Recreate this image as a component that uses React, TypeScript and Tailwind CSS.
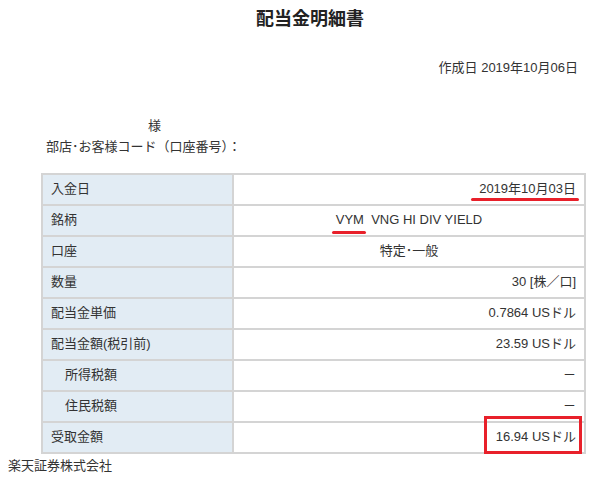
export default function App() {
  const rows: [string, React.ReactNode, string, boolean?][] = [
    ["入金日", <span className="relative">2019年10月03日<span className="absolute left-[-8px] right-[-3px] top-[19px] h-[3px] bg-[#e8202a] rounded-full" /></span>, "right"],
    ["銘柄", <span className="whitespace-pre"><span className="relative">VYM<span className="absolute left-[-4px] right-[-2px] top-[19px] h-[3px] bg-[#e8202a] rounded-full" /></span>  VNG HI DIV YIELD</span>, "center"],
    ["口座", "特定･一般", "center"],
    ["数量", "30 [株／口]", "right"],
    ["配当金単価", "0.7864 USドル", "right"],
    ["配当金額(税引前)", "23.59 USドル", "right"],
    ["所得税額", "－", "right", true],
    ["住民税額", "－", "right", true],
    ["受取金額", <span className="relative">16.94 USドル<span className="absolute left-[-12px] right-[-6px] top-[-11px] h-[38px] border-[3px] border-[#e8202a]" /></span>, "right"],
  ];
  return (
    <div className="w-[600px] h-[484px] bg-white text-[#333] text-[13px] overflow-hidden" style={{ fontFamily: '"Liberation Sans","Noto Sans CJK JP",sans-serif' }}>
      <div className="pt-[6px] text-center text-[18px] font-bold text-[#222] pl-[20px]">配当金明細書</div>
      <div className="mt-[25px] text-right pr-[22px]">作成日 2019年10月06日</div>
      <div className="mt-[38px] pl-[148px]">様</div>
      <div className="mt-[2px] pl-[46px]">部店･お客様コード（口座番号）：</div>
      <div className="ml-[41px] w-[545px] mt-[16px] border-2 border-[#d4d4d4] border-b-0">
        {rows.map(([l, v, a, ind], i) => (
          <div key={i} className="flex h-[31px] border-b-2 border-[#d4d4d4]">
            <div className={`w-[191px] bg-[#e2ecf4] border-r-2 border-[#d4d4d4] flex items-center ${ind ? "pl-[22px]" : "pl-[8px]"}`}>{l}</div>
            <div className={`flex-1 flex items-center px-[8px] ${a === "right" ? "justify-end" : "justify-center"} whitespace-pre`}>{v}</div>
          </div>
        ))}
      </div>
      <div className="pl-[8px] mt-[2px]">楽天証券株式会社</div>
    </div>
  );
}
